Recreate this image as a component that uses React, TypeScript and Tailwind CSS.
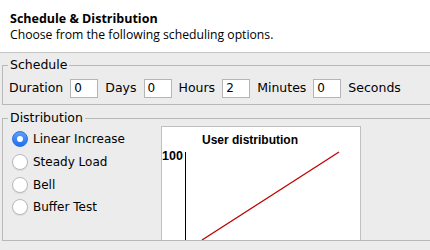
import React from 'react';

const font = { fontFamily: '"DejaVu Sans", "Liberation Sans", sans-serif' };
const headerFont = { fontFamily: '"Open Sans", "DejaVu Sans", sans-serif' };
const chartFont = { fontFamily: '"Liberation Sans", Arial, sans-serif' };

const NumberField = ({ value }: { value: string }) => (
    <div className="w-[28px] h-[19px] bg-white border border-[#b5b5b5] pl-[3px] leading-[17px] text-[12px] text-black">
        {value}
    </div>
);

const Radio = ({ label, checked }: { label: string; checked?: boolean }) => (
    <div className="flex items-center gap-[5px] h-[22.7px]">
        {checked ? (
            <span className="w-[16px] h-[16px] rounded-full bg-gradient-to-b from-[#5aa0fb] to-[#1f6ff0] border border-[#2f6fd9] flex items-center justify-center">
                <span className="w-[6px] h-[6px] rounded-full bg-white" />
            </span>
        ) : (
            <span className="w-[16px] h-[16px] rounded-full bg-white border border-[#b9b9b9] shadow-[0_1px_1px_rgba(0,0,0,0.08)]" />
        )}
        <span className="text-[12px] text-black">{label}</span>
    </div>
);

export default function App() {
    return (
        <div className="w-[430px] h-[250px] overflow-hidden bg-[#ececec] text-black" style={font}>
            {/* Header */}
            <header className="h-[53px] bg-white border-b border-[#c6c6c6] pl-[10px] pt-[10px]" style={headerFont}>
                <h1 className="text-[12.5px] font-bold leading-[17px]">Schedule &amp; Distribution</h1>
                <p className="text-[12.2px] leading-[16px]">Choose from the following scheduling options.</p>
            </header>

            <div className="pl-[2px] pt-[5px] w-[450px]">
                {/* Schedule */}
                <fieldset className="border border-[#b8b8b8] h-[47px] px-[6px]">
                    <legend className="text-[12.5px] px-[2px] ml-[-1px] leading-[14px]">Schedule</legend>
                    <div className="flex items-center gap-[7px] text-[12.5px] pt-[7px]">
                        <span>Duration</span>
                        <NumberField value="0" />
                        <span>Days</span>
                        <NumberField value="0" />
                        <span>Hours</span>
                        <NumberField value="2" />
                        <span>Minutes</span>
                        <NumberField value="0" />
                        <span>Seconds</span>
                    </div>
                </fieldset>

                {/* Distribution */}
                <fieldset className="border border-[#b8b8b8] h-[130px] mt-[6px] px-[9px] overflow-hidden">
                    <legend className="text-[12.5px] px-[2px] ml-[-4px] leading-[14px]">Distribution</legend>
                    <div className="flex gap-[20px] pt-[1px]">
                        <div className="flex flex-col w-[129px] pt-[2px]">
                            <Radio label="Linear Increase" checked />
                            <Radio label="Steady Load" />
                            <Radio label="Bell" />
                            <Radio label="Buffer Test" />
                        </div>
                        <div className="relative w-[200px] h-[140px] bg-white border border-[#c0c0c0] shrink-0" style={chartFont}>
                            <div className="absolute left-0 right-0 top-[5px] pr-[22px] text-center text-[12px] font-bold leading-[16px]">
                                User distribution
                            </div>
                            <div className="absolute left-0 top-[21px] text-[12.5px] font-bold leading-[16px]">100</div>
                            <svg className="absolute inset-0" width="200" height="140" viewBox="0 0 200 140">
                                <line x1="23.5" y1="25" x2="23.5" y2="140" stroke="#000" strokeWidth="1" />
                                <line x1="40" y1="113" x2="177" y2="25" stroke="#c00000" strokeWidth="1.3" />
                            </svg>
                        </div>
                    </div>
                </fieldset>
            </div>
        </div>
    );
}
